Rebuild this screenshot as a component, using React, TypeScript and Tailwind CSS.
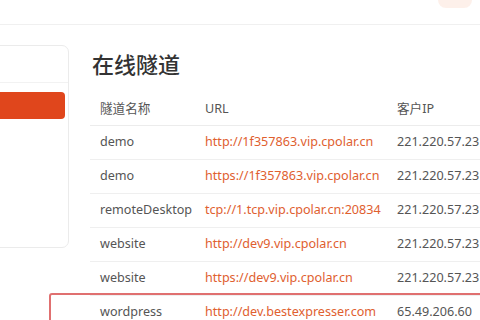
const rows = [
  { name: "demo", url: "http://1f357863.vip.cpolar.cn", ip: "221.220.57.23" },
  { name: "demo", url: "https://1f357863.vip.cpolar.cn", ip: "221.220.57.23" },
  { name: "remoteDesktop", url: "tcp://1.tcp.vip.cpolar.cn:20834", ip: "221.220.57.23" },
  { name: "website", url: "http://dev9.vip.cpolar.cn", ip: "221.220.57.23" },
  { name: "website", url: "https://dev9.vip.cpolar.cn", ip: "221.220.57.23" },
  { name: "wordpress", url: "http://dev.bestexpresser.com", ip: "65.49.206.60" },
];

export default function App() {
  return (
    <div
      className="relative h-[320px] w-[480px] overflow-hidden bg-white text-[#555]"
      style={{ fontFamily: '"Noto Sans", "Noto Sans CJK SC", sans-serif' }}
    >
      {/* top bar */}
      <div className="flex h-[25px] items-start justify-end border-b border-[#f0f0f0] pr-[8px]">
        <div className="h-[8px] w-[34px] rounded-b-full bg-[#fbe6dc] opacity-60" />
      </div>

      <div className="flex">
        {/* sidebar card */}
        <div className="ml-[-12px] mt-[20px] flex h-[203px] w-[81px] shrink-0 flex-col rounded-[7px] border border-[#ebebeb] bg-white">
          <div className="h-[37px] border-b border-[#f2f2f2]" />
          <div className="mt-[9px] h-[27px] w-[76px] rounded-[4px] bg-[#e0461c]" />
        </div>

        {/* main */}
        <div className="ml-[21px] flex-1">
          <h1 className="ml-[2px] mt-[24px] text-[22px] font-medium leading-[30px] text-[#333]">在线隧道</h1>
          <table className="mt-[16px] w-[430px] border-collapse text-left text-[12.6px]">
            <thead>
              <tr className="h-[30px] border-b border-[#ececec]">
                <th className="w-[115px] pl-[10px] font-normal text-[#555]">隧道名称</th>
                <th className="w-[192px] font-normal text-[#555]">URL</th>
                <th className="font-normal text-[#555]">客户IP</th>
              </tr>
            </thead>
            <tbody>
              {rows.map((r, i) => (
                <tr key={i} className="h-[34px] border-b border-[#efefef]">
                  <td className="pl-[10px] text-[#555]">{r.name}</td>
                  <td className="whitespace-nowrap text-[#e0602f]">{r.url}</td>
                  <td className="whitespace-nowrap text-[#555]">{r.ip}</td>
                </tr>
              ))}
            </tbody>
          </table>
        </div>
      </div>

      {/* highlight box */}
      <div className="absolute left-[49px] top-[293px] h-[60px] w-[460px] rounded-[3px] border-2 border-[#e07070]" />
    </div>
  );
}
